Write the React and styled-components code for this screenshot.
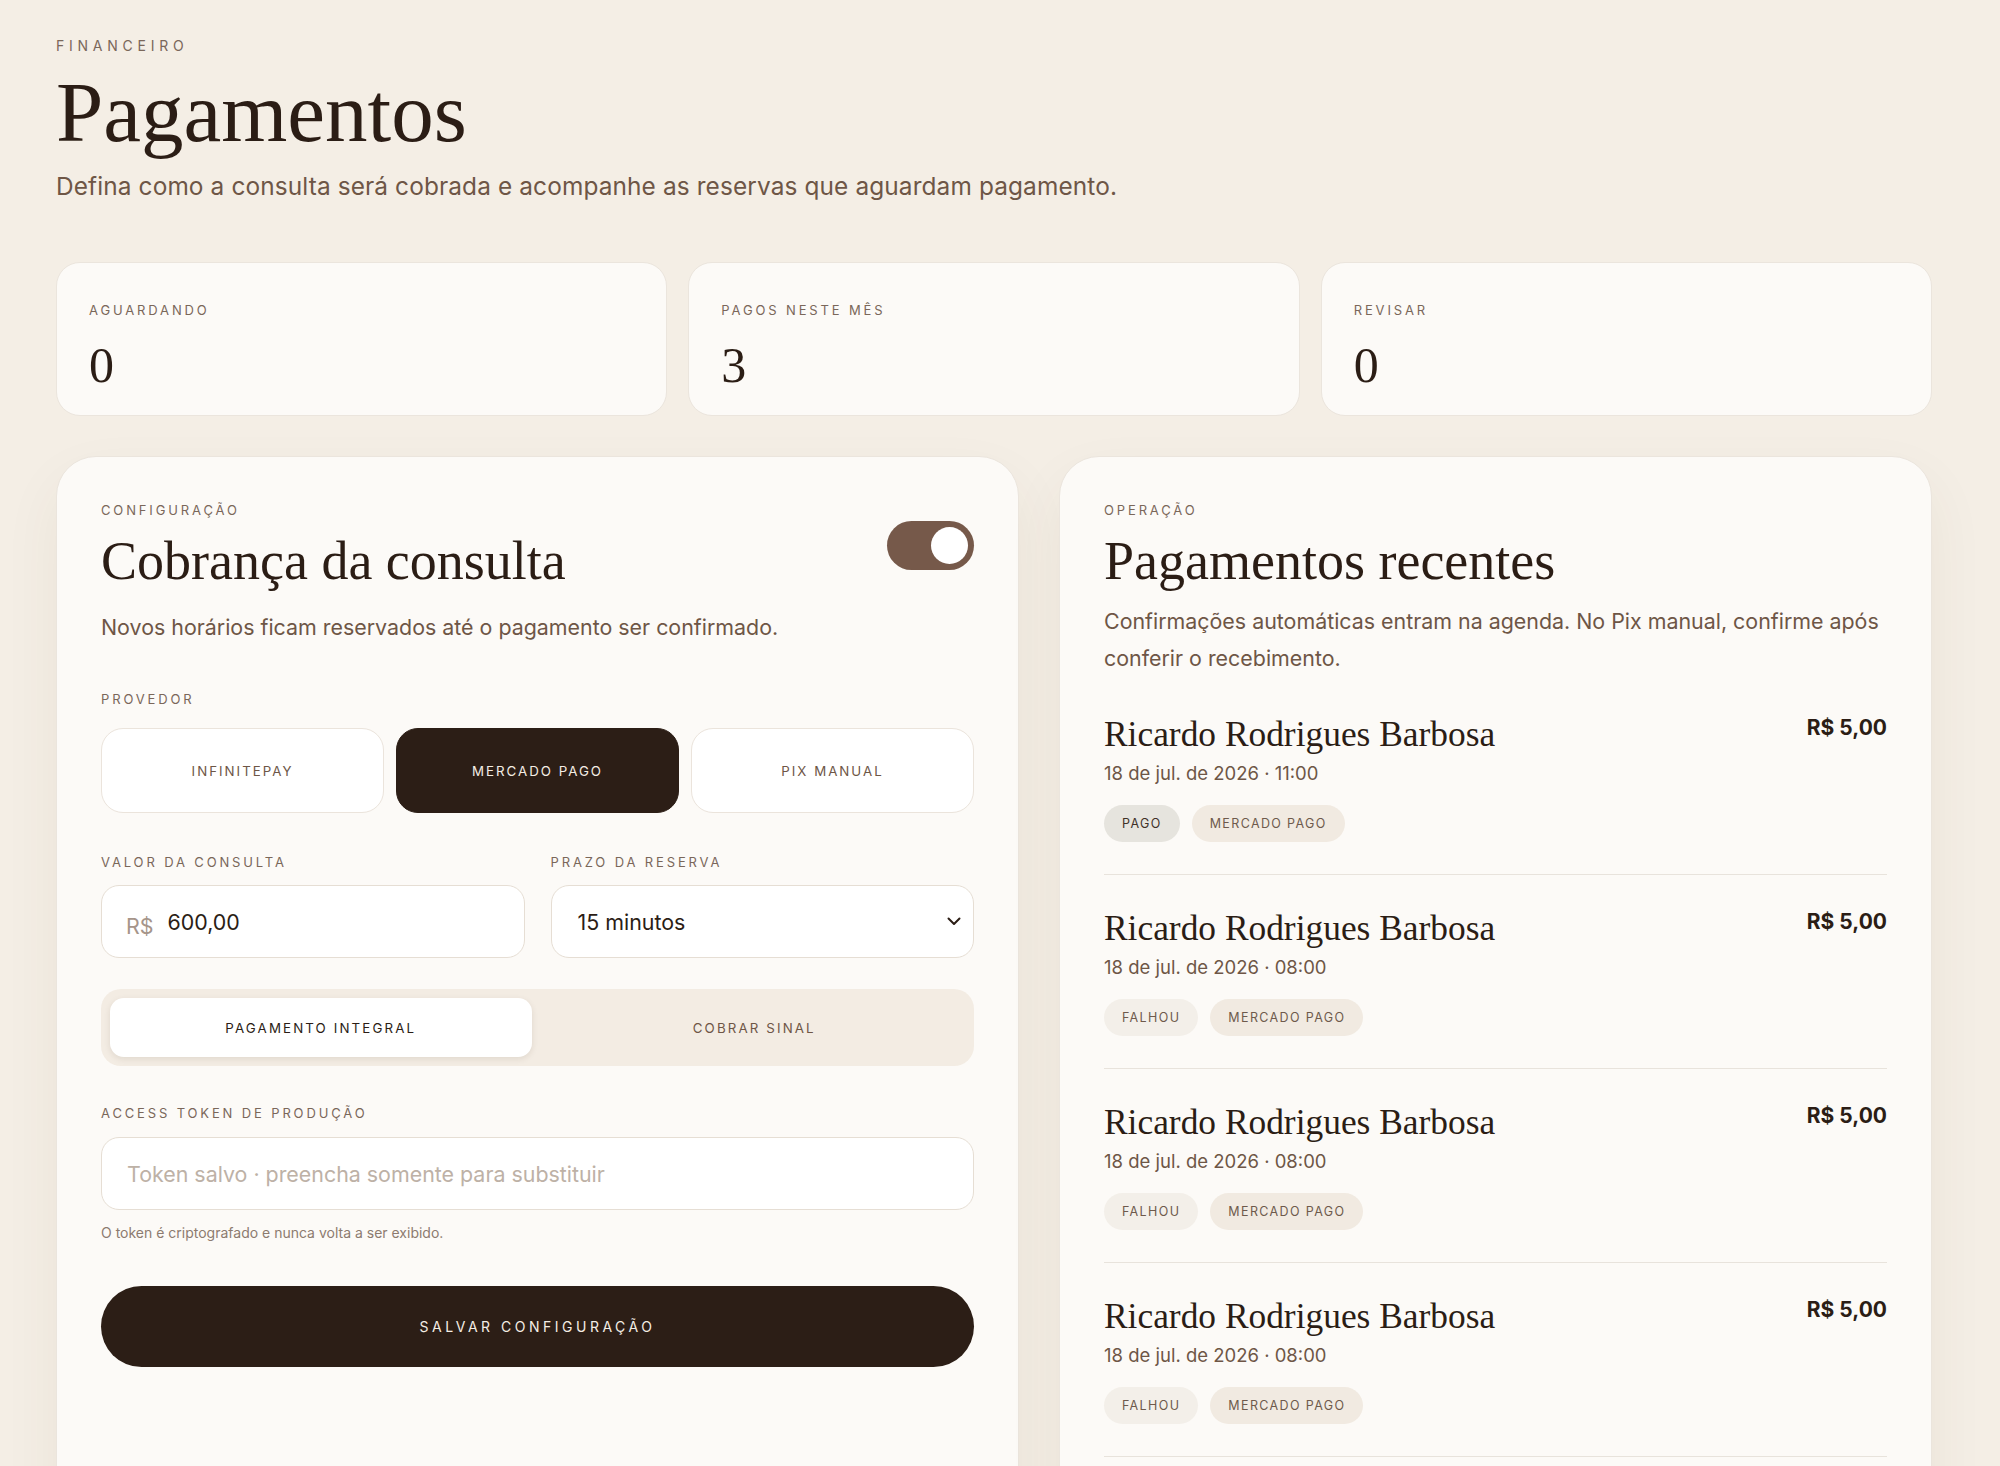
import styled, { createGlobalStyle } from "styled-components";

const GlobalStyle = createGlobalStyle`
    body {
        margin: 0;
        background: #f4eee5;
        font-family: Inter, "Noto Sans", sans-serif;
        color: #2b1d15;
    }
    * {
        box-sizing: border-box;
    }
`;

const Page = styled.div`
    padding: 38px 68px 40px 56px;
`;

const Eyebrow = styled.div`
    font-size: ${(p) => p.$size || "13px"};
    line-height: 16px;
    letter-spacing: ${(p) => p.$spacing || "0.22em"};
    text-transform: uppercase;
    color: #7a675a;
`;

const PageTitle = styled.h1`
    margin: 16px 0 0;
    font-family: "Liberation Serif", serif;
    font-weight: 400;
    font-size: 85px;
    line-height: 84px;
    color: #2b1d15;
`;

const Lead = styled.p`
    margin: 16px 0 0;
    font-size: 24.4px;
    line-height: 33px;
    letter-spacing: 0.005em;
    color: #6e5646;
`;

const Stats = styled.div`
    display: grid;
    grid-template-columns: repeat(3, 1fr);
    gap: 21px;
    margin-top: 59px;
`;

const StatCard = styled.div`
    height: 154px;
    padding: 39px 32px 0;
    background: #fcfaf7;
    border: 1px solid #ebe5dd;
    border-radius: 24px;
`;

const StatValue = styled.div`
    margin-top: 22px;
    font-family: "Liberation Serif", serif;
    font-size: 50px;
    line-height: 50px;
    color: #2b1d15;
`;

const Columns = styled.div`
    display: grid;
    grid-template-columns: 963fr 873fr;
    gap: 40px;
    margin-top: 40px;
    align-items: stretch;
`;

const Panel = styled.section`
    padding: 45px 44px 60px;
    background: #fcfaf7;
    border: 1px solid #ebe5dd;
    border-radius: 40px;
    box-shadow: 0 24px 60px rgba(90, 60, 30, 0.06);
`;

const PanelHead = styled.div`
    display: flex;
    justify-content: space-between;
    align-items: flex-start;
`;

const PanelTitle = styled.h2`
    margin: 13px 0 0;
    font-family: "Liberation Serif", serif;
    font-weight: 400;
    font-size: 54px;
    line-height: 60px;
    color: #2b1d15;
`;

const Toggle = styled.div`
    width: 87px;
    height: 49px;
    margin-top: 19px;
    padding: 6px;
    border-radius: 999px;
    background: #76594a;
    display: flex;
    justify-content: flex-end;
`;

const Knob = styled.span`
    width: 37px;
    height: 37px;
    border-radius: 50%;
    background: #ffffff;
`;

const Text = styled.p`
    margin: ${(p) => p.$margin || "21px 0 0"};
    font-size: 21.4px;
    line-height: ${(p) => p.$lh || "30px"};
    color: #6e5646;
`;

const Field = styled.div`
    margin-top: ${(p) => p.$top || "40px"};
`;

const Providers = styled.div`
    display: grid;
    grid-template-columns: repeat(3, 1fr);
    gap: 12px;
    margin-top: 21px;
`;

const Provider = styled.button`
    height: 85px;
    border-radius: 22px;
    border: 1px solid ${(p) => (p.$active ? "#2c1e16" : "#ebe4dc")};
    background: ${(p) => (p.$active ? "#2c1e16" : "#ffffff")};
    color: ${(p) => (p.$active ? "#f4ede4" : "#6e5646")};
    font-family: Inter, sans-serif;
    font-size: 13.3px;
    letter-spacing: 0.15em;
    text-transform: uppercase;
`;

const Pair = styled.div`
    display: grid;
    grid-template-columns: 1fr 1fr;
    gap: 26px;
    margin-top: 41px;
`;

const InputBox = styled.div`
    height: 73px;
    margin-top: 15px;
    padding: ${(p) => (p.$between ? "0 12px 0 26px" : "0 24px")};
    display: flex;
    align-items: center;
    justify-content: ${(p) => (p.$between ? "space-between" : "flex-start")};
    gap: 14px;
    background: #ffffff;
    border: 1px solid #e6ded4;
    border-radius: 18px;
    font-size: 21.4px;
    color: #2b1d15;
`;

const Prefix = styled.span`
    color: #a6958a;
    padding-top: 8px;
`;

const Segmented = styled.div`
    display: grid;
    grid-template-columns: 1fr 1fr;
    gap: 12px;
    margin-top: 31px;
    padding: 9px;
    background: #f3ece3;
    border-radius: 20px;
`;

const Segment = styled.div`
    height: 59px;
    display: flex;
    align-items: center;
    justify-content: center;
    border-radius: 14px;
    background: ${(p) => (p.$active ? "#ffffff" : "transparent")};
    box-shadow: ${(p) => (p.$active ? "0 2px 6px rgba(60, 40, 20, 0.1)" : "none")};
    color: ${(p) => (p.$active ? "#2b1d15" : "#6e5646")};
    font-size: 13.3px;
    letter-spacing: 0.16em;
`;

const TokenInput = styled.input`
    width: 100%;
    height: 73px;
    margin-top: 16px;
    padding: 0 25px;
    background: #ffffff;
    border: 1px solid #e6ded4;
    border-radius: 18px;
    font-family: Inter, sans-serif;
    font-size: 21.4px;
    outline: none;
    &::placeholder {
        color: #bdb1a6;
    }
`;

const Hint = styled.div`
    margin-top: 14px;
    font-size: 14px;
    line-height: 18px;
    color: #8c7b6f;
`;

const SaveButton = styled.button`
    width: 100%;
    height: 81px;
    margin-top: 44px;
    border: none;
    border-radius: 999px;
    background: #2c1e16;
    color: #f4ede4;
    font-family: Inter, sans-serif;
    font-size: 14px;
    letter-spacing: 0.25em;
`;

const List = styled.div`
    margin-top: 4px;
`;

const Item = styled.div`
    padding: 33px 0 32px;
    border-bottom: 1px solid #e8e3dc;
`;

const ItemTop = styled.div`
    display: flex;
    justify-content: space-between;
    align-items: flex-start;
`;

const Name = styled.div`
    font-family: "Liberation Serif", serif;
    font-size: 35.4px;
    line-height: 41px;
    color: #2b1d15;
`;

const Price = styled.div`
    font-size: 21px;
    font-weight: 700;
    line-height: 27px;
    color: #2b1d15;
`;

const When = styled.div`
    margin-top: 5px;
    font-size: 18.5px;
    line-height: 27px;
    color: #6e5646;
`;

const Tags = styled.div`
    display: flex;
    gap: 12px;
    margin-top: 18px;
`;

const Tag = styled.span`
    height: 37px;
    padding: 0 18px;
    display: inline-flex;
    align-items: center;
    border-radius: 999px;
    background: ${(p) => (p.$tone === "paid" ? "#e6e4de" : p.$tone === "fail" ? "#f3efe9" : "#f1eae1")};
    color: ${(p) => (p.$tone === "paid" ? "#3f3128" : "#6e5a4c")};
    font-size: 12.5px;
    letter-spacing: 0.11em;
`;

const stats = [
    { label: "Aguardando", value: "0" },
    { label: "Pagos neste mês", value: "3" },
    { label: "Revisar", value: "0" },
];

const payments = [
    { when: "18 de jul. de 2026 · 11:00", status: "Pago", tone: "paid" },
    { when: "18 de jul. de 2026 · 08:00", status: "Falhou", tone: "fail" },
    { when: "18 de jul. de 2026 · 08:00", status: "Falhou", tone: "fail" },
    { when: "18 de jul. de 2026 · 08:00", status: "Falhou", tone: "fail" },
    { when: "17 de jul. de 2026 · 14:00", status: "Falhou", tone: "fail" },
];

const Chevron = () => (
    <svg width="14" height="9" viewBox="0 0 14 9" fill="none">
        <path d="M1.5 1.5L7 7l5.5-5.5" stroke="#2b1d15" strokeWidth="2" strokeLinecap="round" strokeLinejoin="round" />
    </svg>
);

const App = () => {
    return (
        <Page>
            <GlobalStyle />
            <Eyebrow $size="14px" $spacing="0.34em">Financeiro</Eyebrow>
            <PageTitle>Pagamentos</PageTitle>
            <Lead>Defina como a consulta será cobrada e acompanhe as reservas que aguardam pagamento.</Lead>

            <Stats>
                {stats.map((s) => (
                    <StatCard key={s.label}>
                        <Eyebrow>{s.label}</Eyebrow>
                        <StatValue>{s.value}</StatValue>
                    </StatCard>
                ))}
            </Stats>

            <Columns>
                <Panel>
                    <PanelHead>
                        <div>
                            <Eyebrow>Configuração</Eyebrow>
                            <PanelTitle>Cobrança da consulta</PanelTitle>
                        </div>
                        <Toggle>
                            <Knob />
                        </Toggle>
                    </PanelHead>
                    <Text>Novos horários ficam reservados até o pagamento ser confirmado.</Text>

                    <Field $top="49px">
                        <Eyebrow>Provedor</Eyebrow>
                        <Providers>
                            <Provider>InfinitePay</Provider>
                            <Provider $active>Mercado Pago</Provider>
                            <Provider>Pix manual</Provider>
                        </Providers>
                    </Field>

                    <Pair>
                        <div>
                            <Eyebrow>Valor da consulta</Eyebrow>
                            <InputBox>
                                <Prefix>R$</Prefix>
                                <span>600,00</span>
                            </InputBox>
                        </div>
                        <div>
                            <Eyebrow>Prazo da reserva</Eyebrow>
                            <InputBox $between>
                                <span>15 minutos</span>
                                <Chevron />
                            </InputBox>
                        </div>
                    </Pair>

                    <Segmented>
                        <Segment $active>PAGAMENTO INTEGRAL</Segment>
                        <Segment>COBRAR SINAL</Segment>
                    </Segmented>

                    <Field $top="39px">
                        <Eyebrow>Access token de produção</Eyebrow>
                        <TokenInput placeholder="Token salvo · preencha somente para substituir" />
                        <Hint>O token é criptografado e nunca volta a ser exibido.</Hint>
                    </Field>

                    <SaveButton>SALVAR CONFIGURAÇÃO</SaveButton>
                </Panel>

                <Panel>
                    <Eyebrow>Operação</Eyebrow>
                    <PanelTitle>Pagamentos recentes</PanelTitle>
                    <Text $margin="12px 0 0" $lh="37px">
                        Confirmações automáticas entram na agenda. No Pix manual, confirme após conferir o recebimento.
                    </Text>
                    <List>
                        {payments.map((p, i) => (
                            <Item key={i}>
                                <ItemTop>
                                    <Name>Ricardo Rodrigues Barbosa</Name>
                                    <Price>R$ 5,00</Price>
                                </ItemTop>
                                <When>{p.when}</When>
                                <Tags>
                                    <Tag $tone={p.tone}>{p.status.toUpperCase()}</Tag>
                                    <Tag>MERCADO PAGO</Tag>
                                </Tags>
                            </Item>
                        ))}
                    </List>
                </Panel>
            </Columns>
        </Page>
    );
};

export default App;
